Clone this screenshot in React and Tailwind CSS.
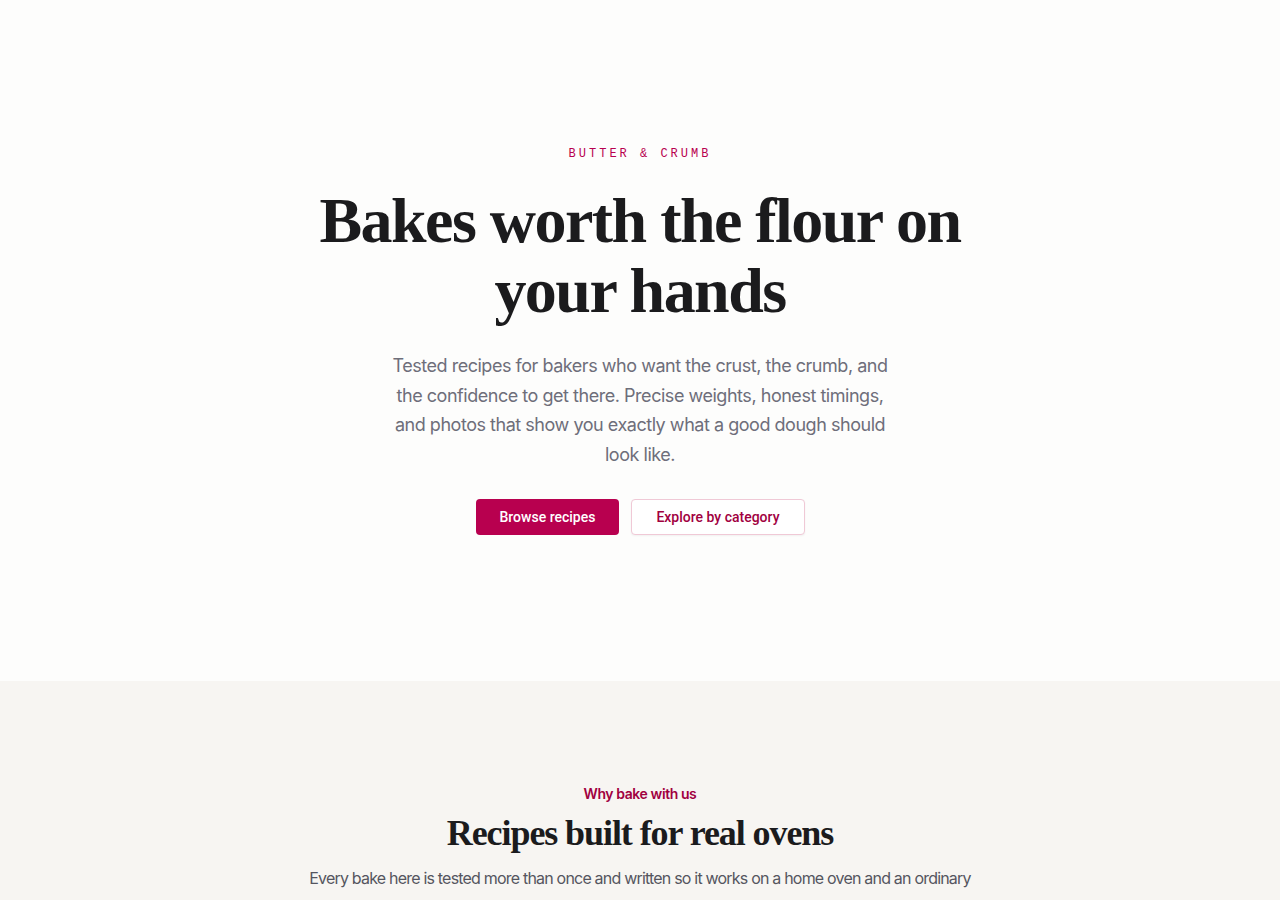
export default function App() {
  return (
    <div className="min-h-screen bg-[#fdfdfc] font-['Inter',sans-serif]">
      {/* Hero */}
      <section className="h-[681px] flex flex-col items-center px-6 pt-[146px] text-center">
        <p className="font-['Liberation_Mono',monospace] text-[12px] leading-4 tracking-[0.25em] text-[#b8004f] uppercase">
          Butter &amp; Crumb
        </p>
        <h1 className="mt-[24px] max-w-[680px] font-['Liberation_Serif',serif] font-bold text-[64px] leading-[70px] tracking-[-0.024em] text-[#1b1b1d]">
          Bakes worth the flour on your hands
        </h1>
        <p className="mt-[25px] max-w-[512px] text-[18px] leading-[29.5px] tracking-[-0.026em] text-[#6e6e7a]">
          Tested recipes for bakers who want the crust, the crumb, and the confidence to get there. Precise weights, honest timings, and photos that show you exactly what a good dough should look like.
        </p>
        <div className="mt-[30px] flex items-center gap-3">
          <button className="h-9 px-6 rounded-[4px] bg-[#b8004f] text-white text-[14px] font-medium font-['Roboto',sans-serif]">
            Browse recipes
          </button>
          <button className="h-9 px-6 rounded-[4px] border border-[#f0c9d6] bg-white text-[#a1003f] text-[14px] font-medium font-['Roboto',sans-serif] shadow-[0_1px_2px_rgba(0,0,0,0.05)]">
            Explore by category
          </button>
        </div>
      </section>

      {/* Why bake with us */}
      <section className="bg-[#f7f5f2] pt-[103px] pb-24 px-6 text-center">
        <p className="text-[14px] leading-5 font-semibold text-[#a1003f] tracking-[-0.03em]">Why bake with us</p>
        <h2 className="mt-[9px] font-['Liberation_Serif',serif] font-bold text-[36px] leading-[40px] tracking-[-0.03em] text-[#1b1b1d]">
          Recipes built for real ovens
        </h2>
        <p className="mx-auto mt-[11px] max-w-[680px] text-[16px] leading-[29px] tracking-[-0.05em] text-[#55555f]">
          Every bake here is tested more than once and written so it works on a home oven and an ordinary kitchen scale. No fussy equipment, no vague steps, just clear methods you will come back to again and again.
        </p>
      </section>
    </div>
  );
}
